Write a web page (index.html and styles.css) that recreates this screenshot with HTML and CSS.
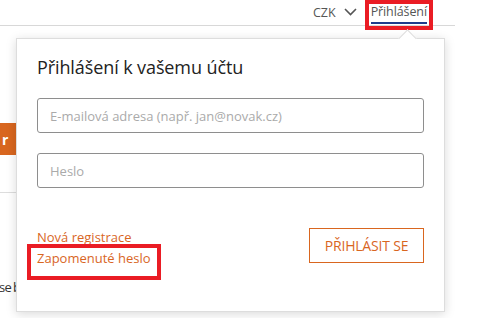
FILE: index.html
```html
<!DOCTYPE html>
<html lang="cs">
<head>
<meta charset="utf-8">
<link rel="stylesheet" href="styles.css">
</head>
<body>
<header class="topbar">
  <div class="topbar-inner">
    <span class="currency">CZK</span>
    <svg class="chev" width="13" height="8" viewBox="0 0 13 8"><path d="M1 1 L6.5 6.5 L12 1" fill="none" stroke="#555" stroke-width="1.6"/></svg>
    <a class="login-link">Přihlášení</a>
  </div>
</header>
<main class="page">
  <div class="side">
    <div class="side-btn"><span>r</span></div>
    <div class="side-line"></div>
    <div class="side-text">se bez registrace</div>
  </div>
</main>
<div class="mark mark-top"></div>
<div class="popup">
  <div class="arrow"></div>
  <h2 class="title">Přihlášení k vašemu účtu</h2>
  <div class="field"><input type="text" placeholder="E-mailová adresa (např. jan@novak.cz)"></div>
  <div class="field"><input type="password" placeholder="Heslo"></div>
  <div class="actions">
    <div class="links">
      <a class="link">Nová registrace</a>
      <a class="link">Zapomenuté heslo</a>
    </div>
    <button class="submit">PŘIHLÁSIT SE</button>
  </div>
</div>
<div class="mark mark-forgot"></div>
</body>
</html>
```
FILE: styles.css
```css
html, body { margin: 0; padding: 0; background: #fff; }
body { font-family: "Open Sans", "Noto Sans", sans-serif; color: #333; width: 500px; height: 318px; overflow: hidden; position: relative; }
.topbar { width: 455px; height: 25px; border-bottom: 1px solid #d8d8d8; }
.topbar-inner { display: flex; justify-content: flex-end; align-items: center; height: 25px; padding-right: 28px; }
.currency { font-size: 12.5px; color: #555; margin-right: 8px; line-height: 25px; }
.chev { margin-right: 14px; margin-top: -1px; }
.login-link { font-size: 12.5px; color: #555; line-height: 22px; border-bottom: 2px solid #1d3c8c; height: 21px; margin-top: 0; letter-spacing: -0.1px; }
.page { display: flex; }
.side { width: 60px; display: flex; flex-direction: column; }
.side-btn { margin-top: 97px; height: 32px; background: #d8661f; color: #fff; font-weight: 700; font-size: 14px; display: flex; align-items: center; width: 60px; }
.side-btn span { padding-left: 2px; }
.side-line { margin-top: 37px; height: 1px; background: #ddd; width: 60px; }
.side-text { margin-top: 85px; font-size: 13px; color: #333; white-space: nowrap; margin-left: -1px; letter-spacing: -0.6px; word-spacing: -1px; }
.popup { position: absolute; left: 16px; top: 38px; width: 429px; height: 274px; box-sizing: border-box; background: #fff; border: 1px solid #ddd; box-shadow: 0 2px 10px rgba(0,0,0,0.15); padding: 16px 20px 0 20px; }
.arrow { position: absolute; top: -7px; left: 384px; width: 12px; height: 12px; background: #fff; border-left: 1px solid #ddd; border-top: 1px solid #ddd; transform: rotate(45deg); }
.title { margin: 0 0 19px 0; font-size: 18px; font-weight: 400; color: #222; line-height: 24px; letter-spacing: -0.1px; }
.field { margin-bottom: 20px; }
.field input { display: block; width: 100%; box-sizing: border-box; height: 35px; border: 1px solid #8e8e8e; border-radius: 3px; padding: 0 12px; font-family: inherit; font-size: 13px; color: #333; outline: none; }
.field input::placeholder { color: #aaa; }
.actions { display: flex; justify-content: space-between; align-items: flex-start; margin-top: 40px; }
.links { display: flex; flex-direction: column; margin-top: -1px; }
.link { font-size: 13px; color: #d9661f; line-height: 21px; width: fit-content; }
.submit { width: 115px; height: 35px; background: #fff; border: 1.5px solid #d9661f; color: #d9661f; font-family: inherit; font-size: 14px; padding: 0; letter-spacing: -0.2px; }
.mark { position: absolute; border: 4px solid #ea1c24; box-sizing: border-box; pointer-events: none; }
.mark-top { left: 365px; top: 0; width: 68px; height: 30px; }
.mark-forgot { left: 27px; top: 244px; width: 134px; height: 36px; }
```
